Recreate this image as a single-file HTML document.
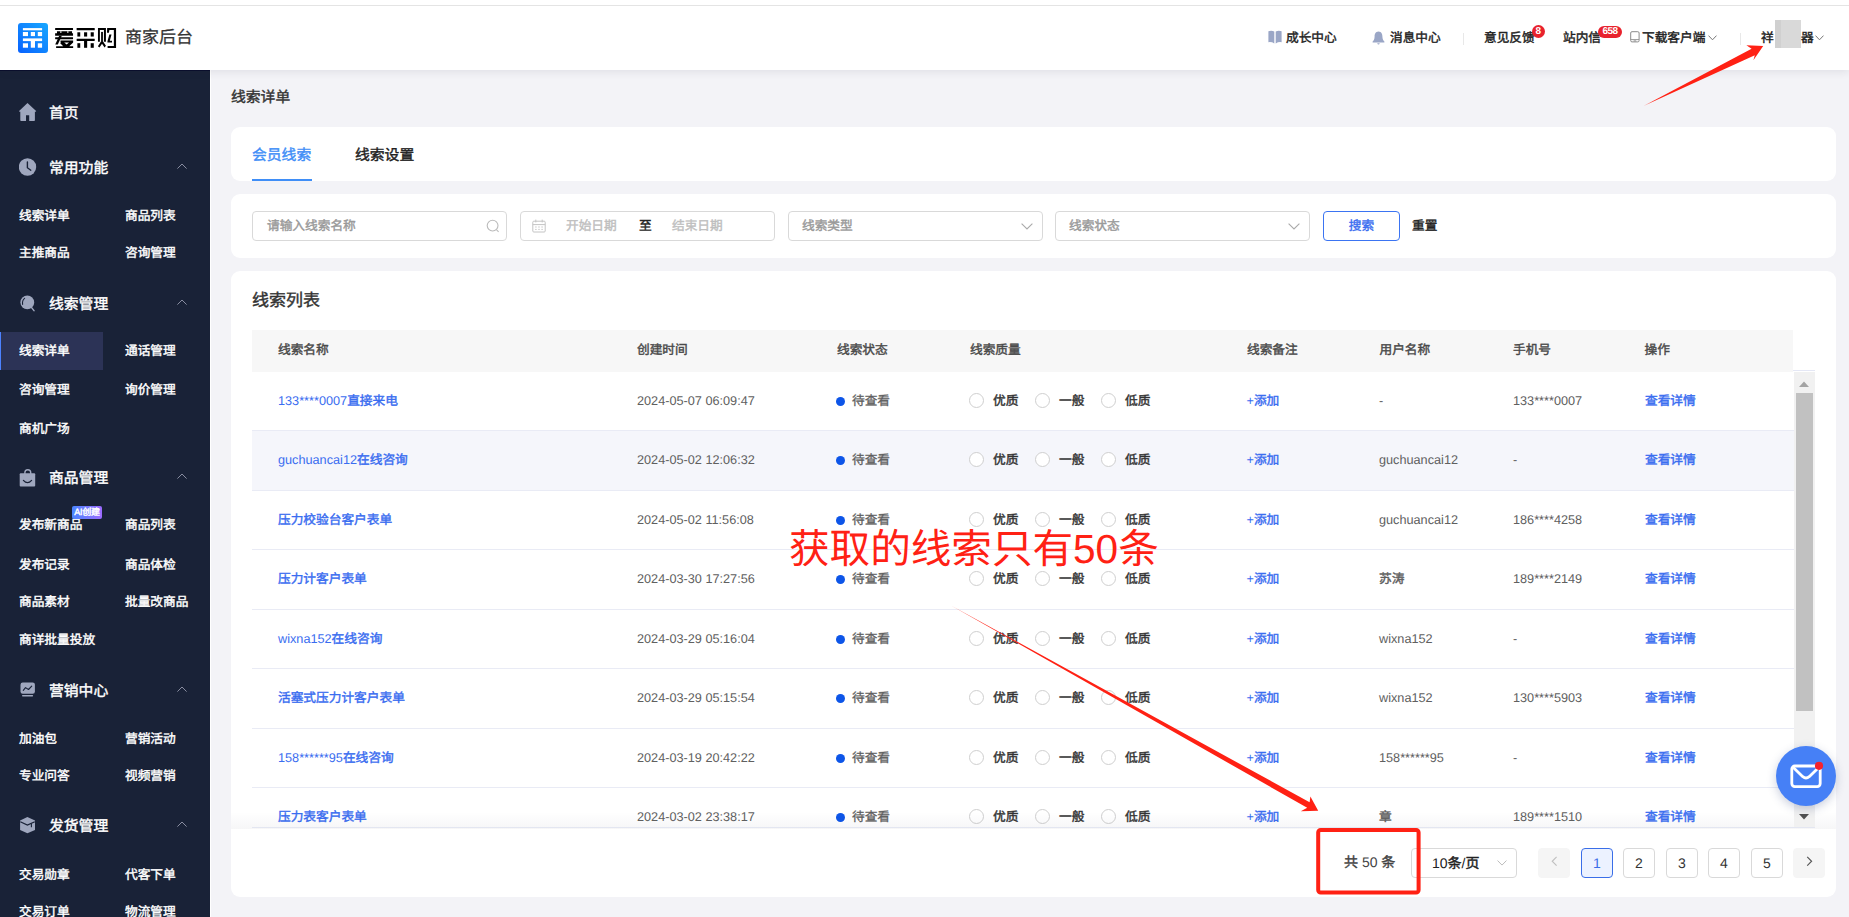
<!DOCTYPE html>
<html lang="zh-CN">
<head>
<meta charset="utf-8">
<title>爱采购 商家后台 - 线索详单</title>
<style>
*{box-sizing:border-box;margin:0;padding:0}
html,body{width:1849px;height:917px;overflow:hidden;background:#f3f3f7;font-family:"Liberation Sans",sans-serif;font-size:12.7px;color:#333;text-rendering:geometricPrecision}
.abs{position:absolute}
b{font-weight:normal;-webkit-text-stroke:.42px currentColor}
i{font-style:normal}
#topline{position:absolute;left:0;top:0;width:1849px;height:6px;background:#fff;border-bottom:1px solid #e4e4e4;z-index:6}
#header{position:absolute;left:0;top:6px;width:1849px;height:64px;background:#fff;box-shadow:0 2px 8px rgba(30,30,60,.09);z-index:5}
#logo{position:absolute;left:18px;top:17px;width:30px;height:30px;border-radius:3px;background:linear-gradient(45deg,#0862ff,#18a8ff)}
#brand{position:absolute;left:52px;top:18px}
#brand2{position:absolute;left:125px;top:20px;font-size:17px;color:#333;line-height:24px;-webkit-text-stroke:.25px currentColor}
.hitem{position:absolute;top:23px;font-size:12.7px;line-height:18px;color:#222;font-weight:normal;-webkit-text-stroke:.42px currentColor;white-space:nowrap}
.hdiv{position:absolute;top:27px;width:1px;height:12px;background:#e8e8e8}
.badge{position:absolute;height:13px;border-radius:7px;background:#e8222d;color:#fff;font-size:10px;line-height:13px;text-align:center;font-weight:bold;letter-spacing:-0.5px}
#side{position:absolute;left:0;top:70px;width:210px;height:847px;background:#192237;color:#fff;z-index:4;box-shadow:inset 0 1px 0 #0a0e2c;overflow:hidden}
.sico{position:absolute;left:19px;width:18px;height:20px}
.sgrp{position:absolute;left:49px;font-size:14.8px;font-weight:normal;-webkit-text-stroke:.42px currentColor;line-height:22px;color:#fff;white-space:nowrap}
.sit{position:absolute;font-size:12.7px;font-weight:normal;-webkit-text-stroke:.42px currentColor;line-height:18px;color:#fff;white-space:nowrap}
.sact{position:absolute;left:0;width:103px;height:38px;background:#2c3356;border-left:1px solid #4c82ff}
.chev{position:absolute;left:177px;width:10px;height:6px}
.aib{position:absolute;left:72px;width:30px;height:13px;border-radius:2px;background:linear-gradient(90deg,#4a86ff,#9b6bff);color:#fff;font-size:9px;line-height:13px;text-align:center;font-weight:normal;-webkit-text-stroke:.42px currentColor;white-space:nowrap;letter-spacing:-0.3px}
.ptitle{font-size:14.8px;font-weight:normal;-webkit-text-stroke:.42px currentColor;line-height:23px;color:#333}
.card{position:absolute;left:231px;width:1605px;background:#fff;border-radius:9px}
.tab{position:absolute;top:19px;font-size:14.8px;font-weight:normal;-webkit-text-stroke:.42px currentColor;line-height:20px;color:#222}
.tab.on{color:#3f8ef7}
.tabline{position:absolute;left:21px;top:52px;width:60px;height:2px;background:#3f8ef7}
.inp{position:absolute;top:17px;height:30px;border:1px solid #d9d9d9;border-radius:4px;background:#fff;color:#9a9a9a;font-weight:normal;-webkit-text-stroke:.42px currentColor;font-size:12.7px;line-height:29px;white-space:nowrap}
.btn{position:absolute;top:17px;width:77px;height:30px;border:1px solid #3b74f2;border-radius:4px;color:#3b6ef0;font-weight:normal;-webkit-text-stroke:.42px currentColor;text-align:center;line-height:29px}
.rst{line-height:31px;font-weight:normal;-webkit-text-stroke:.42px currentColor;color:#222}
.ltitle{font-size:17px;font-weight:normal;-webkit-text-stroke:.42px currentColor;line-height:26px;color:#333}
.thead{position:absolute;left:21px;top:59px;width:1541px;height:42px;background:#f7f7f7}
.th{position:absolute;top:0;line-height:41px;font-size:12.7px;font-weight:normal;-webkit-text-stroke:.42px currentColor;color:#4a4a4a;white-space:nowrap}
.tbody{position:absolute;left:0;top:0;width:1605px;height:556px;overflow:hidden}
.row{position:absolute;left:21px;width:1542px;height:59.43px;border-bottom:1px solid #e9ebf5}
.row.alt{background:#f5f6fb}
.c{position:absolute;top:20px;line-height:19px;font-size:12.7px;white-space:nowrap;color:#606060}
.c.lnk{color:#3a6df0}
.c.st{color:#5e5e5e;-webkit-text-stroke:.3px currentColor}
.c.q{color:#333}
.dot{display:inline-block;width:9px;height:9px;border-radius:50%;background:#0d55e8;margin-right:7px;vertical-align:-0.5px}
.rd{display:inline-block;width:15px;height:15px;border-radius:50%;border:1px solid #cfcfcf;background:#fff;vertical-align:-3px;margin-right:9px}
.sbar{position:absolute;left:1563px;top:101px;width:21px;height:455px;background:#f1f1f1}
.sline{position:absolute;left:1562px;top:98.6px;width:22px;height:1px;background:#e4e7f5}
.sthumb{position:absolute;left:2px;top:21px;width:17px;height:318px;background:#c1c1c1}
.pager{position:absolute;left:0;top:577px;width:1605px;height:30px}
.ptxt{font-size:14px;line-height:18px;color:#444}
.psel{position:absolute;top:0;width:106px;height:30px;border:1px solid #d9d9d9;border-radius:4px;font-size:14px;line-height:28px;color:#222}
.pg{position:absolute;top:0;width:32px;height:30px;border:1px solid #d9d9d9;border-radius:4px;background:#fff;text-align:center;line-height:29px;font-size:14px;color:#333}
.pg.on{border-color:#3a6ee8;background:#ecf2ff;color:#3a6ee8}
.pg.dis,.pg.nx{border-color:#f5f5f5;background:#f5f5f5}
#fab{position:absolute;left:1776px;top:746.4px;width:60px;height:60px;border-radius:50%;background:#4680f6;box-shadow:0 3px 10px rgba(40,60,120,.25);z-index:8}
#anno{position:absolute;left:0;top:0;z-index:9;pointer-events:none}
#redtxt{position:absolute;left:789px;top:519.5px;font-size:40.6px;line-height:58px;color:#ff2114;z-index:9;white-space:nowrap}
#wstrip{position:absolute;left:210px;top:70px;width:1px;height:847px;background:#fff;z-index:3}
.tfade{position:absolute;left:0;top:541px;width:1605px;height:17px;background:linear-gradient(180deg,rgba(30,30,60,0),rgba(30,30,60,.04))}
.tline{position:absolute;left:21px;top:556px;width:1563px;height:1px;background:#e3e6f1}

</style>
</head>
<body>
<div id="topline"></div>
<div id="header">
<div id="logo"><svg width="30" height="30" viewBox="0 0 30 30"><g fill="#fff"><rect x="4.9" y="5.1" width="19.2" height="2.2"/><rect x="4.9" y="15.4" width="19.2" height="2.7"/><rect x="4.9" y="9" width="5.1" height="4.1"/><rect x="12.8" y="9" width="4.2" height="4.1"/><rect x="19.8" y="9" width="4.3" height="4.1"/><rect x="12.8" y="18" width="4.2" height="6.7"/><rect x="4.9" y="20.3" width="5.1" height="4.4"/><rect x="19.8" y="20.3" width="4.3" height="4.4"/></g></svg></div>
<svg id="brand" role="img" aria-label="爱采购" width="68" height="28" viewBox="0 0 1849 761"><title>爱采购</title><g fill="#000">
<rect x="85" y="108" width="487" height="58" rx="10"/><path fill-rule="evenodd" d="M135 196 H545 V252 H572 V320 H85 V252 H135 Z M222 204 h36 v34 h-36 Z M412 204 h36 v34 h-36 Z"/><rect x="85" y="360" width="487" height="52" rx="8"/>
<path d="M196 322 H268 L158 560 H88 Z"/><path fill-rule="evenodd" d="M232 450 H575 V504 L468 602 H575 V652 H112 V604 H306 L224 524 L244 500 H232 Z M332 502 L398 560 L462 502 Z"/>
<rect x="670" y="110" width="492" height="60" rx="10"/><rect x="690" y="225" width="78" height="116"/><rect x="872" y="225" width="84" height="116"/><rect x="1052" y="225" width="84" height="116"/><rect x="670" y="400" width="492" height="60" rx="10"/><rect x="872" y="455" width="84" height="192"/><rect x="690" y="522" width="78" height="125"/><rect x="1052" y="522" width="84" height="125"/>
<path d="M1250 110 H1466 V480 H1412 V166 H1302 V480 H1250 Z"/><rect x="1336" y="215" width="48" height="268"/><path d="M1336 470 H1384 L1466 590 L1430 636 L1360 540 L1290 640 L1248 604 Z"/>
<path d="M1500 110 H1742 V652 H1512 V600 H1682 V166 H1560 L1548 240 H1496 Z"/><path d="M1560 285 L1618 285 L1572 455 H1632 V502 H1508 V470 Z"/>
</g></svg>
<div id="brand2">商家后台</div>
<svg class="abs" style="left:1267.6px;top:24.4px" width="14" height="14" viewBox="0 0 14 14"><path d="M0.4 1.2 Q3.4 0.2 6.3 1.4 V13.4 Q3.4 11.6 0.4 12.2 Z M13.6 1.2 Q10.6 0.2 7.7 1.4 V13.4 Q10.6 11.6 13.6 12.2 Z" fill="#9aa6c6"/></svg>
<div class="hitem" style="left:1286px">成长中心</div>
<svg class="abs" style="left:1372px;top:25px" width="13" height="14" viewBox="0 0 13 14"><path d="M6.5 0.6 C3.4 0.8 2.6 3.4 2.6 5.4 C2.6 8 1.6 9.4 0.6 10.6 V11.4 H12.4 V10.6 C11.4 9.4 10.4 8 10.4 5.4 C10.4 3.4 9.6 0.8 6.5 0.6 Z M5.2 12.2 H7.8 Q7.4 13.4 6.5 13.4 Q5.6 13.4 5.2 12.2 Z" fill="#9aa6c6"/></svg>
<div class="hitem" style="left:1390px">消息中心</div>
<div class="hdiv" style="left:1463px"></div>
<div class="hitem" style="left:1484px">意见反馈</div>
<div class="badge" style="left:1531.5px;top:18.5px;width:13px">8</div>
<div class="hitem" style="left:1563px">站内信</div>
<div class="badge" style="left:1598px;top:19.5px;width:24px;height:12px;line-height:12px">658</div>
<svg class="abs" style="left:1630px;top:24.9px" width="10" height="12" viewBox="0 0 10 12"><rect x="0.7" y="0.7" width="8.4" height="10.2" rx="1.3" fill="none" stroke="#8c8c8c" stroke-width="1"/><path d="M0.8 8.6 H9 M3.6 9.9 H6.2" stroke="#8c8c8c" stroke-width=".9"/></svg>
<div class="hitem" style="left:1642px">下载客户端</div>
<svg class="abs" style="left:1708px;top:29px" width="9" height="6" viewBox="0 0 9 6"><path d="M0.5 0.6 L4.5 4.8 L8.5 0.6" fill="none" stroke="#777" stroke-width="1"/></svg>
<div class="hdiv" style="left:1740px"></div>
<div class="hitem" style="left:1761px">祥</div>
<div class="abs" style="left:1775px;top:14px;width:6px;height:28px;background:#d0d0d0"></div>
<div class="abs" style="left:1781px;top:14px;width:20px;height:28px;background:#d9d9d9"></div>
<div class="hitem" style="left:1801px">器</div>
<svg class="abs" style="left:1815px;top:29px" width="9" height="6" viewBox="0 0 9 6"><path d="M0.5 0.6 L4.5 4.8 L8.5 0.6" fill="none" stroke="#777" stroke-width="1"/></svg>
</div>
<div id="wstrip"></div>
<div id="side">
<div class="sico" style="top:32px"><svg width="18" height="20" viewBox="0 0 18 20"><path d="M8.5 0.9 L0.1 8.9 Q-0.2 9.7 0.7 9.7 H1.3 V18.2 Q1.3 19 2.1 19 H7 V13.2 H10.2 V19 H15.1 Q15.9 19 15.9 18.2 V9.7 H16.5 Q17.4 9.7 17.1 8.9 Z" fill="#9fa7be"/></svg></div><div class="sgrp" style="top:32.5px">首页</div>
<div class="sico" style="top:87px"><svg width="18" height="20" viewBox="0 0 18 20"><circle cx="8.5" cy="10" r="8.7" fill="#9fa7be"/><path d="M8.4 5 V10.8 L11.8 13.2" fill="none" stroke="#192237" stroke-width="1.4" stroke-linecap="round" stroke-linejoin="round"/></svg></div><div class="sgrp" style="top:87.6px">常用功能</div><svg class="chev" style="top:92.8px" viewBox="0 0 10 6"><path d="M0.4 5.6 L5 1 L9.6 5.6" fill="none" stroke="#8f94a6" stroke-width="0.95"/></svg>
<div class="sit" style="left:19px;top:136.9px">线索详单</div>
<div class="sit" style="left:125px;top:136.9px">商品列表</div>
<div class="sit" style="left:19px;top:174.4px">主推商品</div>
<div class="sit" style="left:125px;top:174.4px">咨询管理</div>
<div class="sico" style="top:223.3px"><svg width="18" height="20" viewBox="0 0 18 20"><circle cx="8.3" cy="9.4" r="6.9" fill="#9fa7be"/><path d="M3.6 11.4 Q3 7.2 5.6 5.4" fill="none" stroke="#192237" stroke-width="1.1" stroke-linecap="round"/><path d="M12.4 14.4 L15 17.6" stroke="#9fa7be" stroke-width="1.5" stroke-linecap="round"/></svg></div><div class="sgrp" style="top:223.9px">线索管理</div><svg class="chev" style="top:229.10000000000002px" viewBox="0 0 10 6"><path d="M0.4 5.6 L5 1 L9.6 5.6" fill="none" stroke="#8f94a6" stroke-width="0.95"/></svg>
<div class="sact" style="top:262px"></div>
<div class="sit" style="left:19px;top:272.4px">线索详单</div>
<div class="sit" style="left:125px;top:272.4px">通话管理</div>
<div class="sit" style="left:19px;top:311.0px">咨询管理</div>
<div class="sit" style="left:125px;top:311.0px">询价管理</div>
<div class="sit" style="left:19px;top:349.9px">商机广场</div>
<div class="sico" style="top:397.6px"><svg width="18" height="20" viewBox="0 0 18 20"><path d="M5.9 6 V4.6 A2.9 2.9 0 0 1 11.7 4.6 V6" fill="none" stroke="#9fa7be" stroke-width="1.4"/><rect x="0.7" y="5.2" width="15.5" height="13.2" rx="1" fill="#9fa7be"/><path d="M4.4 12.4 Q8.5 17 12.6 12.4" fill="none" stroke="#192237" stroke-width="1.2" stroke-linecap="round"/></svg></div><div class="sgrp" style="top:398.20000000000005px">商品管理</div><svg class="chev" style="top:403.40000000000003px" viewBox="0 0 10 6"><path d="M0.4 5.6 L5 1 L9.6 5.6" fill="none" stroke="#8f94a6" stroke-width="0.95"/></svg>
<div class="sit" style="left:19px;top:446.4px">发布新商品</div>
<div class="sit" style="left:125px;top:446.4px">商品列表</div>
<div class="aib" style="top:436px">AI创建</div>
<div class="sit" style="left:19px;top:485.9px">发布记录</div>
<div class="sit" style="left:125px;top:485.9px">商品体检</div>
<div class="sit" style="left:19px;top:523.4px">商品素材</div>
<div class="sit" style="left:125px;top:523.4px">批量改商品</div>
<div class="sit" style="left:19px;top:561.4px">商详批量投放</div>
<div class="sico" style="top:610px"><svg width="18" height="20" viewBox="0 0 18 20"><rect x="1.5" y="2.6" width="14.4" height="11.2" rx="2.2" fill="#9fa7be"/><path d="M4.3 10.4 L6.5 7.6 L9.5 9.5 L12.7 6.1" fill="none" stroke="#192237" stroke-width="1.1" stroke-linecap="round" stroke-linejoin="round"/><rect x="3" y="15.1" width="11.1" height="1.4" rx=".7" fill="#9fa7be"/></svg></div><div class="sgrp" style="top:610.6px">营销中心</div><svg class="chev" style="top:615.8px" viewBox="0 0 10 6"><path d="M0.4 5.6 L5 1 L9.6 5.6" fill="none" stroke="#8f94a6" stroke-width="0.95"/></svg>
<div class="sit" style="left:19px;top:659.6999999999999px">加油包</div>
<div class="sit" style="left:125px;top:659.6999999999999px">营销活动</div>
<div class="sit" style="left:19px;top:697.4px">专业问答</div>
<div class="sit" style="left:125px;top:697.4px">视频营销</div>
<div class="sico" style="top:745.4px"><svg width="18" height="20" viewBox="0 0 18 20"><path d="M8.4 1.9 L16 5.5 V15.1 L8.4 18.3 L1.1 15.1 V5.5 Z" fill="#9fa7be"/><path d="M1.3 6.7 L8.4 10.1 L15.8 6.7" fill="none" stroke="#192237" stroke-width="1.2"/><path d="M12.4 8.4 V12.2" stroke="#192237" stroke-width="1.1"/></svg></div><div class="sgrp" style="top:746.0px">发货管理</div><svg class="chev" style="top:751.1999999999999px" viewBox="0 0 10 6"><path d="M0.4 5.6 L5 1 L9.6 5.6" fill="none" stroke="#8f94a6" stroke-width="0.95"/></svg>
<div class="sit" style="left:19px;top:795.8px">交易勋章</div>
<div class="sit" style="left:125px;top:795.8px">代客下单</div>
<div class="sit" style="left:19px;top:832.9px">交易订单</div>
<div class="sit" style="left:125px;top:832.9px">物流管理</div>
</div>
<div id="main">
<div class="abs ptitle" style="left:231px;top:87px">线索详单</div>
<div class="card" style="top:127px;height:54px">
  <div class="tab on" style="left:21px">会员线索</div>
  <div class="tabline"></div>
  <div class="tab" style="left:124px">线索设置</div>
</div>
<div class="card" style="top:194px;height:64px">
  <div class="inp" style="left:21px;width:255px"><span style="position:absolute;left:14px">请输入线索名称</span>
    <svg class="abs" style="left:233px;top:7px" width="14" height="14" viewBox="0 0 14 14"><circle cx="6.6" cy="6.6" r="5.4" fill="none" stroke="#bbb" stroke-width="1.1"/><path d="M10.4 10.6 L12.6 12.8" stroke="#bbb" stroke-width="1.1"/></svg></div>
  <div class="inp" style="left:289px;width:255px">
    <svg class="abs" style="left:11px;top:7px" width="14" height="14" viewBox="0 0 14 14"><rect x="0.8" y="2.2" width="12.4" height="10.8" rx="1" fill="none" stroke="#c4c4c4" stroke-width="1"/><path d="M0.8 5.6 H13.2 M3.8 0.6 V3.4 M10.2 0.6 V3.4" stroke="#c4c4c4" stroke-width="1"/><path d="M3.2 8 H4.6 M6.3 8 H7.7 M9.4 8 H10.8 M3.2 10.4 H4.6 M6.3 10.4 H7.7 M9.4 10.4 H10.8" stroke="#c4c4c4" stroke-width="1"/></svg>
    <span style="position:absolute;left:45px;color:#bfbfbf">开始日期</span><span style="position:absolute;left:118px;color:#222">至</span><span style="position:absolute;left:151px;color:#bfbfbf">结束日期</span></div>
  <div class="inp" style="left:557px;width:255px"><span style="position:absolute;left:13px">线索类型</span>
    <svg class="abs" style="left:232px;top:11px" width="12" height="7" viewBox="0 0 12 7"><path d="M0.6 0.6 L6 6 L11.4 0.6" fill="none" stroke="#aaa" stroke-width="1.1"/></svg></div>
  <div class="inp" style="left:824px;width:255px"><span style="position:absolute;left:13px">线索状态</span>
    <svg class="abs" style="left:232px;top:11px" width="12" height="7" viewBox="0 0 12 7"><path d="M0.6 0.6 L6 6 L11.4 0.6" fill="none" stroke="#aaa" stroke-width="1.1"/></svg></div>
  <div class="btn" style="left:1092px">搜索</div>
  <div class="abs rst" style="left:1181px;top:17px">重置</div>
</div>
<div class="card" style="top:271px;height:626px">
  <div class="abs ltitle" style="left:21px;top:17px">线索列表</div>
  <div class="thead"><span class="th" style="left:26px">线索名称</span><span class="th" style="left:385px">创建时间</span><span class="th" style="left:585px">线索状态</span><span class="th" style="left:718px">线索质量</span><span class="th" style="left:995px">线索备注</span><span class="th" style="left:1127.5px">用户名称</span><span class="th" style="left:1261px">手机号</span><span class="th" style="left:1392.5px">操作</span></div>
  <div class="tbody">
<div class="row" style="top:101px;height:59px">
<span class="c lnk" style="left:26px">133****0007<b>直接来电</b></span>
<span class="c" style="left:385px">2024-05-07 06:09:47</span>
<span class="c st" style="left:584px"><i class="dot"></i>待查看</span>
<span class="c q" style="left:717px"><i class="rd"></i><b>优质</b></span>
<span class="c q" style="left:783px"><i class="rd"></i><b>一般</b></span>
<span class="c q" style="left:849px"><i class="rd"></i><b>低质</b></span>
<span class="c lnk" style="left:994.5px">+<b>添加</b></span>
<span class="c" style="left:1127px">-</span>
<span class="c" style="left:1261px">133****0007</span>
<span class="c lnk" style="left:1393px"><b>查看详情</b></span>
</div>
<div class="row alt" style="top:160px;height:60px">
<span class="c lnk" style="left:26px">guchuancai12<b>在线咨询</b></span>
<span class="c" style="left:385px">2024-05-02 12:06:32</span>
<span class="c st" style="left:584px"><i class="dot"></i>待查看</span>
<span class="c q" style="left:717px"><i class="rd"></i><b>优质</b></span>
<span class="c q" style="left:783px"><i class="rd"></i><b>一般</b></span>
<span class="c q" style="left:849px"><i class="rd"></i><b>低质</b></span>
<span class="c lnk" style="left:994.5px">+<b>添加</b></span>
<span class="c" style="left:1127px">guchuancai12</span>
<span class="c" style="left:1261px">-</span>
<span class="c lnk" style="left:1393px"><b>查看详情</b></span>
</div>
<div class="row" style="top:220px;height:59px">
<span class="c lnk" style="left:26px"><b>压力校验台客户表单</b></span>
<span class="c" style="left:385px">2024-05-02 11:56:08</span>
<span class="c st" style="left:584px"><i class="dot"></i>待查看</span>
<span class="c q" style="left:717px"><i class="rd"></i><b>优质</b></span>
<span class="c q" style="left:783px"><i class="rd"></i><b>一般</b></span>
<span class="c q" style="left:849px"><i class="rd"></i><b>低质</b></span>
<span class="c lnk" style="left:994.5px">+<b>添加</b></span>
<span class="c" style="left:1127px">guchuancai12</span>
<span class="c" style="left:1261px">186****4258</span>
<span class="c lnk" style="left:1393px"><b>查看详情</b></span>
</div>
<div class="row" style="top:279px;height:60px">
<span class="c lnk" style="left:26px"><b>压力计客户表单</b></span>
<span class="c" style="left:385px">2024-03-30 17:27:56</span>
<span class="c st" style="left:584px"><i class="dot"></i>待查看</span>
<span class="c q" style="left:717px"><i class="rd"></i><b>优质</b></span>
<span class="c q" style="left:783px"><i class="rd"></i><b>一般</b></span>
<span class="c q" style="left:849px"><i class="rd"></i><b>低质</b></span>
<span class="c lnk" style="left:994.5px">+<b>添加</b></span>
<span class="c" style="left:1127px"><b>苏涛</b></span>
<span class="c" style="left:1261px">189****2149</span>
<span class="c lnk" style="left:1393px"><b>查看详情</b></span>
</div>
<div class="row" style="top:339px;height:59px">
<span class="c lnk" style="left:26px">wixna152<b>在线咨询</b></span>
<span class="c" style="left:385px">2024-03-29 05:16:04</span>
<span class="c st" style="left:584px"><i class="dot"></i>待查看</span>
<span class="c q" style="left:717px"><i class="rd"></i><b>优质</b></span>
<span class="c q" style="left:783px"><i class="rd"></i><b>一般</b></span>
<span class="c q" style="left:849px"><i class="rd"></i><b>低质</b></span>
<span class="c lnk" style="left:994.5px">+<b>添加</b></span>
<span class="c" style="left:1127px">wixna152</span>
<span class="c" style="left:1261px">-</span>
<span class="c lnk" style="left:1393px"><b>查看详情</b></span>
</div>
<div class="row" style="top:398px;height:60px">
<span class="c lnk" style="left:26px"><b>活塞式压力计客户表单</b></span>
<span class="c" style="left:385px">2024-03-29 05:15:54</span>
<span class="c st" style="left:584px"><i class="dot"></i>待查看</span>
<span class="c q" style="left:717px"><i class="rd"></i><b>优质</b></span>
<span class="c q" style="left:783px"><i class="rd"></i><b>一般</b></span>
<span class="c q" style="left:849px"><i class="rd"></i><b>低质</b></span>
<span class="c lnk" style="left:994.5px">+<b>添加</b></span>
<span class="c" style="left:1127px">wixna152</span>
<span class="c" style="left:1261px">130****5903</span>
<span class="c lnk" style="left:1393px"><b>查看详情</b></span>
</div>
<div class="row" style="top:458px;height:59px">
<span class="c lnk" style="left:26px">158******95<b>在线咨询</b></span>
<span class="c" style="left:385px">2024-03-19 20:42:22</span>
<span class="c st" style="left:584px"><i class="dot"></i>待查看</span>
<span class="c q" style="left:717px"><i class="rd"></i><b>优质</b></span>
<span class="c q" style="left:783px"><i class="rd"></i><b>一般</b></span>
<span class="c q" style="left:849px"><i class="rd"></i><b>低质</b></span>
<span class="c lnk" style="left:994.5px">+<b>添加</b></span>
<span class="c" style="left:1127px">158******95</span>
<span class="c" style="left:1261px">-</span>
<span class="c lnk" style="left:1393px"><b>查看详情</b></span>
</div>
<div class="row" style="top:517px;height:60px">
<span class="c lnk" style="left:26px"><b>压力表客户表单</b></span>
<span class="c" style="left:385px">2024-03-02 23:38:17</span>
<span class="c st" style="left:584px"><i class="dot"></i>待查看</span>
<span class="c q" style="left:717px"><i class="rd"></i><b>优质</b></span>
<span class="c q" style="left:783px"><i class="rd"></i><b>一般</b></span>
<span class="c q" style="left:849px"><i class="rd"></i><b>低质</b></span>
<span class="c lnk" style="left:994.5px">+<b>添加</b></span>
<span class="c" style="left:1127px"><b>章</b></span>
<span class="c" style="left:1261px">189****1510</span>
<span class="c lnk" style="left:1393px"><b>查看详情</b></span>
</div>
  </div>
  <div class="tfade"></div><div class="tline"></div>
  <div class="sline"></div>
  <div class="sbar"><div class="sthumb"></div>
    <svg class="abs" style="left:5px;top:8.5px" width="10" height="6" viewBox="0 0 10 6"><path d="M0 6 L5 0.6 L10 6 Z" fill="#a3a3a3"/></svg>
    <svg class="abs" style="left:5px;top:442px" width="10" height="6" viewBox="0 0 10 6"><path d="M0 0 L5 5.4 L10 0 Z" fill="#505050"/></svg>
  </div>
  <div class="pager">
    <div class="abs ptxt" style="left:1113px;top:5px"><b>共</b> 50 <b>条</b></div>
    <div class="psel" style="left:1180px"><span style="position:absolute;left:20px">10<b>条</b>/<b>页</b></span><svg class="abs" style="left:85px;top:11px" width="10" height="6.4" viewBox="0 0 11 7"><path d="M0.6 0.6 L5.5 5.6 L10.4 0.6" fill="none" stroke="#bcbcbc" stroke-width="1.1"/></svg></div>
    <div class="pg dis" style="left:1307px"><svg width="7" height="10.5" viewBox="0 0 8 12" style="position:absolute;left:12px;top:6.6px"><path d="M6.4 1 L1.4 6 L6.4 11" fill="none" stroke="#c0c0c0" stroke-width="1.3"/></svg></div><div class="pg on" style="left:1350px">1</div><div class="pg " style="left:1392px">2</div><div class="pg " style="left:1435px">3</div><div class="pg " style="left:1477px">4</div><div class="pg " style="left:1520px">5</div><div class="pg nx" style="left:1562px"><svg width="7" height="10.5" viewBox="0 0 8 12" style="position:absolute;left:12px;top:6.6px"><path d="M1.4 1 L6.4 6 L1.4 11" fill="none" stroke="#555" stroke-width="1.3"/></svg></div>
  </div>
</div>
</div>

<div id="fab"><svg width="60" height="60" viewBox="0 0 60 60"><rect x="15.8" y="20" width="28.4" height="20.6" rx="3" fill="none" stroke="#fff" stroke-width="2.8"/><path d="M16.8 21.1 L26.8 30.7 Q30 33.3 33.2 30.7 L43.2 21.1" fill="none" stroke="#fff" stroke-width="2.8" stroke-linejoin="round"/><circle cx="43" cy="19.8" r="4.1" fill="#f5222d"/></svg></div>
<svg id="anno" width="1849" height="917" viewBox="0 0 1849 917">
  <polygon points="1644,105.8 1751.6,48.8 1746.4,45.2 1763.2,46 1753.4,60.2 1754.8,55.2" fill="#ff2114"/>
  <polygon points="951,605.4 1309.6,802.2 1310.4,796.6 1318.2,810.8 1300.8,811.2 1307.2,807.8" fill="#ff2114"/>
  <rect x="1318.2" y="830" width="100.4" height="62.5" rx="2.5" fill="none" stroke="#ff2114" stroke-width="4"/>
</svg>
<div id="redtxt">获取的线索只有50条</div>

</body>
</html>
